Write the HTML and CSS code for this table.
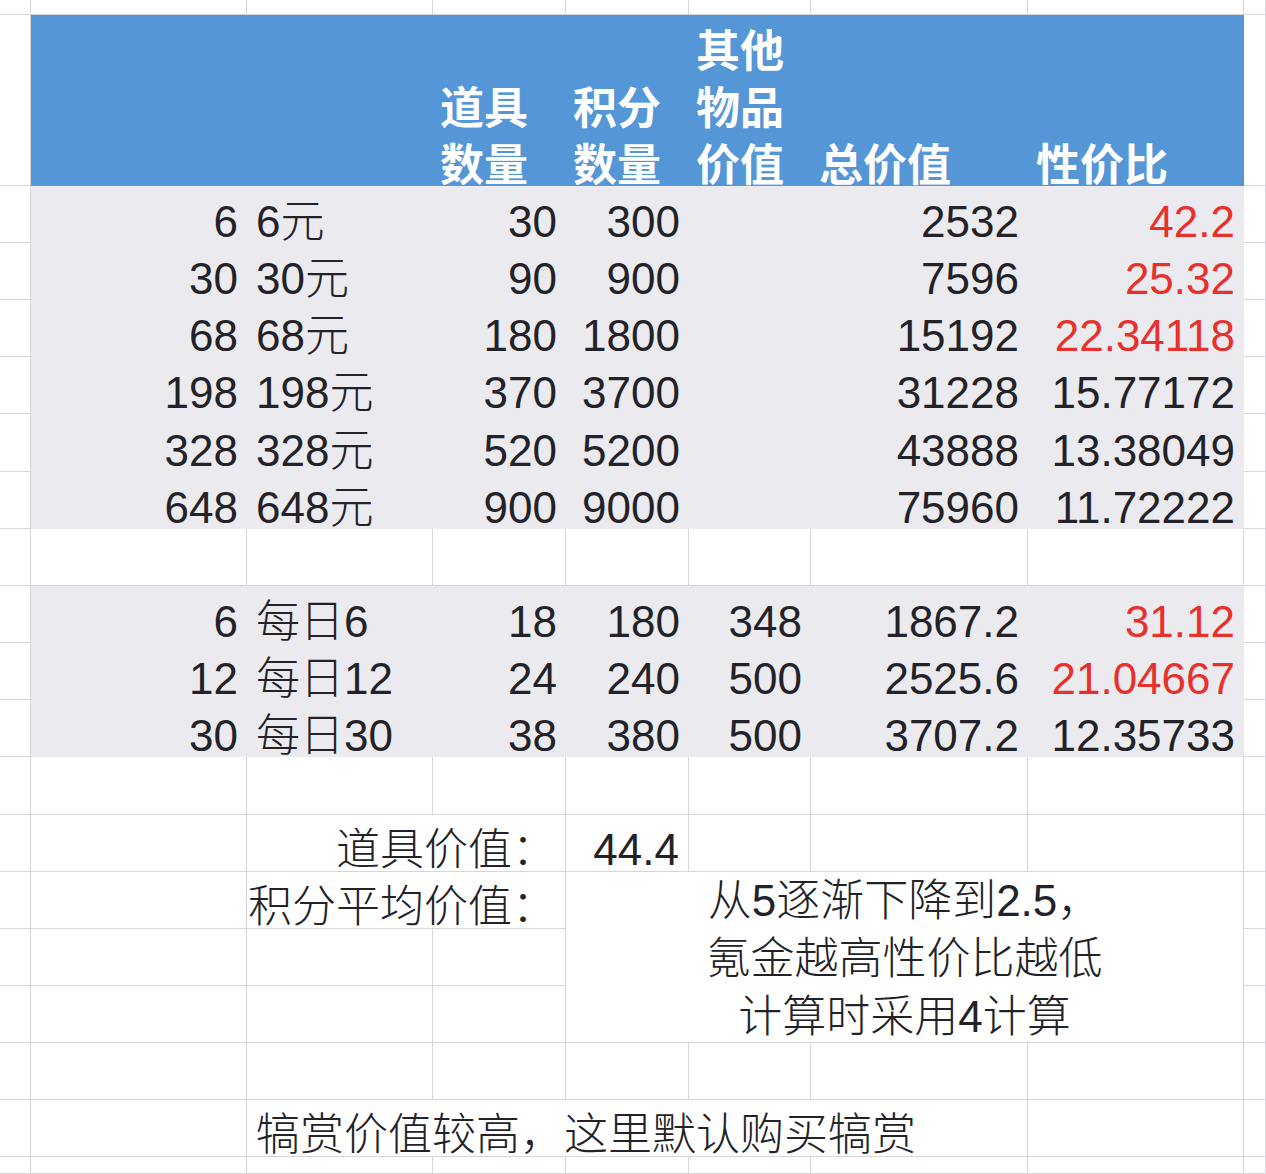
FILE: index.html
```html
<!DOCTYPE html>
<html lang="zh-CN">
<head>
<meta charset="utf-8">
<title>性价比</title>
<link rel="stylesheet" href="styles.css">
</head>
<body>
<div class="sheet">
  <!-- row 0 -->
  <div class="c"></div><div class="c"></div><div class="c"></div><div class="c"></div><div class="c"></div><div class="c"></div><div class="c"></div><div class="c"></div><div class="c"></div>
  <!-- header -->
  <div class="c"></div>
  <div class="h"></div>
  <div class="h"></div>
  <div class="h"><div class="ht">道具<br>数量</div></div>
  <div class="h"><div class="ht">积分<br>数量</div></div>
  <div class="h"><div class="ht">其他<br>物品<br>价值</div></div>
  <div class="h hg"><div class="ht">总价值</div></div>
  <div class="h hg"><div class="ht">性价比</div></div>
  <div class="c"></div>
  <!-- data rows -->
  <div class="c"></div><div class="c g r">6</div><div class="c g">6元</div><div class="c g r">30</div><div class="c g r">300</div><div class="c g"></div><div class="c g r">2532</div><div class="c g r red">42.2</div><div class="c"></div>
  <div class="c"></div><div class="c g r">30</div><div class="c g">30元</div><div class="c g r">90</div><div class="c g r">900</div><div class="c g"></div><div class="c g r">7596</div><div class="c g r red">25.32</div><div class="c"></div>
  <div class="c"></div><div class="c g r">68</div><div class="c g">68元</div><div class="c g r">180</div><div class="c g r">1800</div><div class="c g"></div><div class="c g r">15192</div><div class="c g r red">22.34118</div><div class="c"></div>
  <div class="c"></div><div class="c g r">198</div><div class="c g">198元</div><div class="c g r">370</div><div class="c g r">3700</div><div class="c g"></div><div class="c g r">31228</div><div class="c g r">15.77172</div><div class="c"></div>
  <div class="c"></div><div class="c g r">328</div><div class="c g">328元</div><div class="c g r">520</div><div class="c g r">5200</div><div class="c g"></div><div class="c g r">43888</div><div class="c g r">13.38049</div><div class="c"></div>
  <div class="c"></div><div class="c g r">648</div><div class="c g">648元</div><div class="c g r">900</div><div class="c g r">9000</div><div class="c g"></div><div class="c g r">75960</div><div class="c g r">11.72222</div><div class="c"></div>
  <!-- blank -->
  <div class="c"></div><div class="c"></div><div class="c"></div><div class="c"></div><div class="c"></div><div class="c"></div><div class="c"></div><div class="c"></div><div class="c"></div>
  <!-- daily -->
  <div class="c"></div><div class="c g r">6</div><div class="c g">每日6</div><div class="c g r">18</div><div class="c g r">180</div><div class="c g r">348</div><div class="c g r">1867.2</div><div class="c g r red">31.12</div><div class="c"></div>
  <div class="c"></div><div class="c g r">12</div><div class="c g">每日12</div><div class="c g r">24</div><div class="c g r">240</div><div class="c g r">500</div><div class="c g r">2525.6</div><div class="c g r red">21.04667</div><div class="c"></div>
  <div class="c"></div><div class="c g r">30</div><div class="c g">每日30</div><div class="c g r">38</div><div class="c g r">380</div><div class="c g r">500</div><div class="c g r">3707.2</div><div class="c g r">12.35733</div><div class="c"></div>
  <!-- blank -->
  <div class="c"></div><div class="c"></div><div class="c"></div><div class="c"></div><div class="c"></div><div class="c"></div><div class="c"></div><div class="c"></div><div class="c"></div>
  <!-- 道具价值 -->
  <div class="c"></div><div class="c"></div><div class="c r span2">道具价值：</div><div class="c r">44.4</div><div class="c"></div><div class="c"></div><div class="c"></div><div class="c"></div>
  <!-- 积分平均价值 -->
  <div class="c"></div><div class="c"></div><div class="c r span2">积分平均价值：</div>
  <div class="c note"><div>从5逐渐下降到2.5，<br>氪金越高性价比越低<br>计算时采用4计算</div></div>
  <div class="c"></div>
  <div class="c"></div><div class="c"></div><div class="c"></div><div class="c"></div><div class="c"></div>
  <div class="c"></div><div class="c"></div><div class="c"></div><div class="c"></div><div class="c"></div>
  <!-- blank -->
  <div class="c"></div><div class="c"></div><div class="c"></div><div class="c"></div><div class="c"></div><div class="c"></div><div class="c"></div><div class="c"></div><div class="c"></div>
  <!-- 犒赏 -->
  <div class="c"></div><div class="c"></div><div class="c span5">犒赏价值较高，这里默认购买犒赏</div><div class="c"></div><div class="c"></div>
  <!-- partial -->
  <div class="c"></div><div class="c"></div><div class="c"></div><div class="c"></div><div class="c"></div><div class="c"></div><div class="c"></div><div class="c"></div><div class="c"></div>
</div>
</body>
</html>
```

FILE: styles.css
```css
* { box-sizing: border-box; }

body {
  margin: 0;
  background: #ffffff;
}

.sheet {
  display: grid;
  grid-template-columns: 31px 216px 186px 133px 123px 122px 217px 216px 22px;
  grid-template-rows: 15px 171px 57px 57px 57px 57px 58px 57px 57px 57px 57px 57px 58px 57px 57px 57px 57px 57px 57px 17px;
  width: 1266px;
  height: 1174px;
  overflow: hidden;
  font-family: "Liberation Sans", "Noto Sans CJK SC", sans-serif;
  font-size: 44px;
  font-weight: 300;
  color: #222228;
}

.c {
  display: flex;
  align-items: flex-end;
  justify-content: flex-start;
  line-height: 43px;
  padding: 0 9px;
  white-space: nowrap;
  border-right: 1px solid #d5d5dc;
  border-bottom: 1px solid #d5d5dc;
  background: #ffffff;
}

.g {
  background: #ebebef;
  border: none;
}

.r {
  justify-content: flex-end;
}

.red {
  color: #e8302c;
}

.span2 {
  grid-column: span 2;
}

.span5 {
  grid-column: span 5;
}

.note {
  grid-column: span 4;
  grid-row: span 3;
  align-items: center;
  justify-content: center;
  text-align: center;
  line-height: 58px;
  padding-top: 4px;
}

.h {
  display: flex;
  flex-direction: column;
  justify-content: flex-end;
  align-items: flex-start;
  background: #5596d6;
  color: #ffffff;
  font-family: "Noto Sans CJK SC", sans-serif;
  font-weight: 700;
  line-height: 57px;
  padding-left: 7px;
  overflow: hidden;
  white-space: nowrap;
}

.hg {
  padding-left: 8px;
}

.ht {
  margin-bottom: -5px;
}
```
